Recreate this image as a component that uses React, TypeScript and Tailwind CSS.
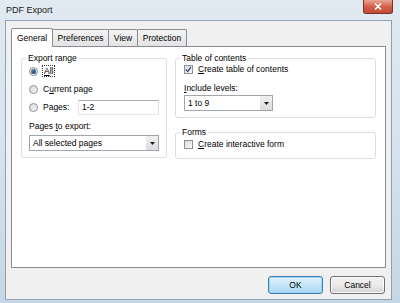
import React from "react";

const Radio: React.FC<{ checked?: boolean }> = ({ checked }) => (
  <div className="w-[9px] h-[9px] rounded-full border border-[#8c8f94] bg-linear-to-br from-[#d8d8d8] to-[#f8f8f8] flex items-center justify-center shrink-0">
    {checked && (
      <div className="w-[5px] h-[5px] rounded-full bg-linear-to-br from-[#6b8fb3] to-[#16385c]" />
    )}
  </div>
);

const Checkbox: React.FC<{ checked?: boolean }> = ({ checked }) => (
  <div className="w-[9px] h-[9px] border border-[#8c8f94] bg-linear-to-br from-[#dcdcdc] to-[#fafafa] flex items-center justify-center shrink-0">
    {checked && (
      <svg width="7" height="7" viewBox="0 0 7 7">
        <path d="M1 3.5 L2.8 5.5 L6 1" fill="none" stroke="#3d4f85" strokeWidth="1.3" />
      </svg>
    )}
  </div>
);

const Select: React.FC<{ value: string; width: string }> = ({ value, width }) => (
  <div className={`${width} h-[16px] border border-[#a0a6ad] bg-white flex items-stretch`}>
    <div className="flex-1 flex items-center pl-[3px]">{value}</div>
    <div className="w-[12px] bg-linear-to-b from-[#f0f0f0] to-[#dcdcdc] flex items-center justify-center">
      <svg width="5" height="3" viewBox="0 0 5 3">
        <path d="M0 0 H5 L2.5 3 Z" fill="#1a1a1a" />
      </svg>
    </div>
  </div>
);

const Group: React.FC<{ title: string; className: string; children: React.ReactNode }> = ({
  title,
  className,
  children,
}) => (
  <fieldset className={`border border-[#d5dfe5] rounded-[3px] ${className}`}>
    <legend className="ml-[4px] px-[2px] leading-[10px]">{title}</legend>
    {children}
  </fieldset>
);

const Tab: React.FC<{ label: string; width: string; active?: boolean }> = ({ label, width, active }) =>
  active ? (
    <div className={`${width} h-[19px] bg-white border border-b-0 border-[#898c95] rounded-t-[2px] flex items-center justify-center -mb-px relative z-10`}>
      {label}
    </div>
  ) : (
    <div className={`${width} h-[17px] bg-linear-to-b from-[#f4f4f4] to-[#e3e3e3] border border-b-0 border-[#898c95] rounded-t-[2px] flex items-center justify-center -ml-px`}>
      {label}
    </div>
  );

export default function App() {
  return (
    <div className="w-[400px] h-[303px] flex flex-col bg-linear-to-b from-[#e1e9f1] via-[#d6e2ed] to-[#c5d6e5] text-[8.5px] leading-[10px] text-black font-['Liberation_Sans',Arial,sans-serif]">
      {/* title bar */}
      <div className="h-[20px] flex items-start shrink-0">
        <div className="pl-[6px] pt-[5px] text-[9px] text-[#1a1a1a]">PDF Export</div>
        <div className="ml-auto mr-[7px] w-[30px] h-[14px] rounded-b-[3px] border border-t-0 border-[#7a3229] bg-linear-to-b from-[#e8a493] via-[#d4604c] to-[#c24a36] flex items-center justify-center">
          <svg width="8" height="7" viewBox="0 0 8 7">
            <path d="M1 0.5 L7 6.5 M7 0.5 L1 6.5" stroke="#ffffff" strokeWidth="1.6" />
          </svg>
        </div>
      </div>

      {/* body */}
      <div className="flex-1 ml-[5px] mr-[8px] mb-[3px] border border-[#8ea2b5] bg-[#f0f0f0] flex flex-col pl-[5px] pt-[6px]">
        <div className="flex items-end h-[19px]">
          <Tab label="General" width="w-[42px]" active />
          <Tab label="Preferences" width="w-[57px]" />
          <Tab label="View" width="w-[30px]" />
          <Tab label="Protection" width="w-[50px]" />
        </div>

        <div className="w-[375px] h-[222px] bg-white border border-[#898c95] flex items-start gap-[8px] pl-[9px] pt-[6px]">
          <Group title="Export range" className="w-[146px] h-[105px] flex flex-col">
            <div className="-mt-px pl-[7px]">
              <div className="h-[18px] flex items-center gap-[5px]">
                <Radio checked />
                <span className="border border-dotted border-[#333] px-px -ml-px">
                  <span className="underline">A</span>ll
                </span>
              </div>
              <div className="h-[18px] flex items-center gap-[5px]">
                <Radio />
                <span>
                  C<span className="underline">u</span>rrent page
                </span>
              </div>
              <div className="h-[18px] flex items-center gap-[5px]">
                <Radio />
                <span className="w-[30px]">Pages:</span>
                <div className="w-[81px] h-[15px] border border-[#abadb3] border-l-[#e2e3ea] border-b-[#e3e9ef] border-r-[#dbdfe6] flex items-center pl-[3px]">
                  1-2
                </div>
              </div>
              <div className="mt-[5px]">
                Pages <span className="underline">t</span>o export:
              </div>
              <div className="mt-[4px]">
                <Select value="All selected pages" width="w-[130px]" />
              </div>
            </div>
          </Group>

          <div className="flex flex-col gap-[9px]">
            <Group title="Table of contents" className="w-[201px] h-[65px]">
              <div className="pl-[8px] -mt-px">
                <div className="h-[14px] flex items-center gap-[5px]">
                  <Checkbox checked />
                  <span>
                    <span className="underline">C</span>reate table of contents
                  </span>
                </div>
                <div className="mt-[7px]">
                  <span className="underline">I</span>nclude levels:
                </div>
                <div className="mt-[2px]">
                  <Select value="1 to 9" width="w-[89px]" />
                </div>
              </div>
            </Group>
            <Group title="Forms" className="w-[201px] h-[32px]">
              <div className="pl-[8px]">
                <div className="h-[14px] flex items-center gap-[5px]">
                  <Checkbox />
                  <span>
                    <span className="underline">C</span>reate interactive form
                  </span>
                </div>
              </div>
            </Group>
          </div>
        </div>

        <div className="w-[375px] flex justify-end gap-[7px] mt-[8px] pr-px">
          <button className="w-[55px] h-[18px] rounded-[3px] border border-[#3c7fb1] bg-linear-to-b from-[#e5f4fc] via-[#c4e5f6] to-[#a9d9f2] shadow-[inset_0_0_0_1px_#9fd8f5] flex items-center justify-center">
            OK
          </button>
          <button className="w-[55px] h-[18px] rounded-[3px] border border-[#707070] bg-linear-to-b from-[#f2f2f2] via-[#ebebeb] to-[#d2d2d2] shadow-[inset_0_0_0_1px_#fcfcfc] flex items-center justify-center">
            Cancel
          </button>
        </div>
      </div>
    </div>
  );
}
